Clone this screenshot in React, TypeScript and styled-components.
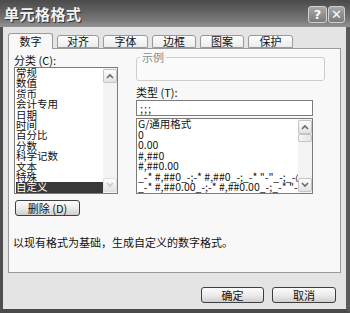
import React from "react";
import styled, { createGlobalStyle } from "styled-components";

const Global = createGlobalStyle`
  html, body { margin: 0; padding: 0; background: #e4e4e4; }
  body { font-family: "Noto Sans CJK SC", "Noto Sans", sans-serif; }
  * { box-sizing: border-box; }
`;

const Window = styled.div`
  width: 350px;
  height: 313px;
  display: flex;
  flex-direction: column;
  background: #e4e4e4;
  overflow: hidden;
`;

const TitleBar = styled.div`
  height: 27px;
  flex: none;
  display: flex;
  align-items: center;
  justify-content: space-between;
  padding: 0 5px 0 4px;
  background: linear-gradient(#4a4a4a 0%, #5e5e5e 35%, #787878 75%, #939393 100%);
`;

const Title = styled.div`
  font-size: 15px;
  font-weight: bold;
  color: #f2f2f2;
  letter-spacing: 0.5px;
  text-shadow: 1px 1px 0 #333;
  line-height: 16px;
`;

const TitleButtons = styled.div`
  display: flex;
  gap: 1px;
  margin-top: 1px;
`;

const TitleButton = styled.div<{ $w: number }>`
  width: ${(p) => p.$w}px;
  height: 17px;
  border: 1px solid #d0d0d0;
  border-radius: 3px;
  background: linear-gradient(#a8a8a8, #7a7a7a);
  display: flex;
  align-items: center;
  justify-content: center;
  color: #fafafa;
  font-family: "DejaVu Sans", sans-serif;
  font-weight: bold;
  font-size: 13px;
  line-height: 1;
`;

const Frame = styled.div`
  flex: 1;
  border-left: 3px solid #505050;
  border-right: 4px solid #5a5a5a;
  border-bottom: 4px solid #4a4a4a;
  display: flex;
  flex-direction: column;
`;

const TabRow = styled.div`
  display: flex;
  align-items: flex-end;
  height: 21px;
  padding: 0 0 0 5px;
  gap: 4px;
  position: relative;
  z-index: 1;
`;

const Tab = styled.div<{ $active?: boolean; $w: number }>`
  width: ${(p) => p.$w}px;
  height: ${(p) => (p.$active ? 16 : 13)}px;
  margin-bottom: ${(p) => (p.$active ? -1 : 0)}px;
  border: 1px solid #9a9a9a;
  border-bottom: ${(p) => (p.$active ? "none" : "1px solid #9a9a9a")};
  border-radius: 3px 3px 0 0;
  background: ${(p) =>
    p.$active ? "#f8f8f8" : "linear-gradient(#fdfdfd, #ececec)"};
  font-size: 11px;
  line-height: ${(p) => (p.$active ? 14 : 11)}px;
  text-align: center;
  color: #111;
`;

const Panel = styled.div`
  margin: 0 5px;
  height: 225px;
  border: 1px solid #9a9a9a;
  background: #f8f8f8;
  padding: 4px 0 0 5px;
  display: flex;
  flex-direction: column;
`;

const Columns = styled.div`
  display: flex;
  gap: 18px;
`;

const LeftCol = styled.div`
  width: 104px;
  display: flex;
  flex-direction: column;
`;

const RightCol = styled.div`
  width: 189px;
  display: flex;
  flex-direction: column;
`;

const Label = styled.div<{ $mt: number }>`
  margin-top: ${(p) => p.$mt}px;
  font-size: 11px;
  line-height: 12px;
  height: 12px;
  color: #111;
  white-space: nowrap;
`;

const ListBox = styled.div<{ $h: number; $mt: number; $w?: number }>`
  margin-top: ${(p) => p.$mt}px;
  height: ${(p) => p.$h}px;
  width: ${(p) => (p.$w ? `${p.$w}px` : "100%")};
  border: 1px solid #7c7c7c;
  background: #fff;
  display: flex;
`;

const Items = styled.div<{ $lh: number }>`
  flex: 1;
  min-width: 0;
  overflow: hidden;
  font-size: 10.5px;
  line-height: ${(p) => p.$lh}px;
  color: #111;
`;

const Item = styled.div<{ $sel?: boolean }>`
  white-space: nowrap;
  padding-left: ${(p) => (p.$sel ? 0 : 1)}px;
  margin-left: ${(p) => (p.$sel ? 1 : 0)}px;
  background: ${(p) => (p.$sel ? "#383838" : "transparent")};
  color: ${(p) => (p.$sel ? "#fff" : "#111")};
`;

const ScrollBar = styled.div`
  width: 14px;
  flex: none;
  background: #f3f3f3;
  display: flex;
  flex-direction: column;
  justify-content: space-between;
  padding: 1px 0;
`;

const ScrollTrack = styled.div`
  flex: 1;
  display: flex;
  flex-direction: column;
`;

const ScrollBtn = styled.div<{ $faint?: boolean }>`
  height: 14px;
  border: 1px solid ${(p) => (p.$faint ? "#e0e0e0" : "#c4c4c4")};
  border-radius: 2px;
  background: linear-gradient(#fdfdfd, #e2e2e2);
  display: flex;
  align-items: center;
  justify-content: center;
`;

const Thumb = styled.div`
  height: 8px;
  border: 1px solid #c4c4c4;
  border-radius: 2px;
  background: linear-gradient(90deg, #f6f6f6, #e4e4e4);
`;

const Button = styled.div<{ $w: number; $ml?: number }>`
  width: ${(p) => p.$w}px;
  height: 16px;
  margin-left: ${(p) => p.$ml ?? 0}px;
  border: 1px solid #3f3f3f;
  border-radius: 3px;
  background: linear-gradient(#fbfbfb 0%, #ececec 50%, #cfcfcf 100%);
  font-size: 11px;
  line-height: 14px;
  text-align: center;
  color: #111;
  white-space: nowrap;
`;

const DelButton = styled(Button)`
  margin-top: 6px;
`;

const GroupBox = styled.div`
  margin-top: 4px;
  height: 24px;
  border: 1px solid #cdcdcd;
  border-radius: 3px;
  background: #fbfbfb;
`;

const Legend = styled.div`
  display: inline-block;
  margin: -6px 0 0 3px;
  padding: 0 2px;
  background: #f8f8f8;
  font-size: 11px;
  line-height: 11px;
  color: #8a8a8a;
  vertical-align: top;
`;

const TextInput = styled.div`
  margin-top: 2px;
  width: 177px;
  height: 16px;
  border: 1px solid #7c7c7c;
  background: #fff;
  font-size: 11px;
  line-height: 14px;
  padding-left: 3px;
  color: #333;
  letter-spacing: 1px;
`;

const Description = styled.div`
  margin: 20px 0 0 -1px;
  font-size: 11px;
  line-height: 12px;
  color: #111;
  white-space: nowrap;
`;

const Footer = styled.div`
  display: flex;
  justify-content: flex-end;
  gap: 8px;
  padding-right: 10px;
  margin-top: 14px;
`;

const Chevron = ({ up, faint }: { up?: boolean; faint?: boolean }) => (
  <svg width="8" height="6" viewBox="0 0 8 6">
    <path
      d={up ? "M1 5 L4 2 L7 5" : "M1 1 L4 4 L7 1"}
      fill="none"
      stroke={faint ? "#c8c8c8" : "#6a6a6a"}
      strokeWidth="1.6"
    />
  </svg>
);

const categories = [
  "常规",
  "数值",
  "货币",
  "会计专用",
  "日期",
  "时间",
  "百分比",
  "分数",
  "科学记数",
  "文本",
  "特殊",
  "自定义",
];

const formats = [
  "G/通用格式",
  "0",
  "0.00",
  "#,##0",
  "#,##0.00",
  '_-* #,##0_-;-* #,##0_-;_-* "-"_-;_-@_-',
  '_-* #,##0.00_-;-* #,##0.00_-;_-* "-"??_-;_-@_-',
];

const tabs = [
  { t: "数字", w: 45, a: true },
  { t: "对齐", w: 42 },
  { t: "字体", w: 45 },
  { t: "边框", w: 44 },
  { t: "图案", w: 44 },
  { t: "保护", w: 45 },
];

export default function App() {
  return (
    <>
      <Global />
      <Window>
        <TitleBar>
          <Title>单元格格式</Title>
          <TitleButtons>
            <TitleButton $w={19}>?</TitleButton>
            <TitleButton $w={17}>✕</TitleButton>
          </TitleButtons>
        </TitleBar>
        <Frame>
          <TabRow>
            {tabs.map((t) => (
              <Tab key={t.t} $active={t.a} $w={t.w}>
                {t.t}
              </Tab>
            ))}
          </TabRow>
          <Panel>
            <Columns>
              <LeftCol>
                <Label $mt={1}>分类 (C):</Label>
                <ListBox $h={127} $mt={1}>
                  <Items $lh={10.4}>
                    {categories.map((c, i) => (
                      <Item key={c} $sel={i === categories.length - 1}>
                        {c}
                      </Item>
                    ))}
                  </Items>
                  <ScrollBar>
                    <ScrollBtn>
                      <Chevron up />
                    </ScrollBtn>
                    <ScrollBtn $faint>
                      <Chevron faint />
                    </ScrollBtn>
                  </ScrollBar>
                </ListBox>
                <DelButton $w={65} $ml={1}>
                  删除 (D)
                </DelButton>
              </LeftCol>
              <RightCol>
                <GroupBox>
                  <Legend>示例</Legend>
                </GroupBox>
                <Label $mt={5}>类型 (T):</Label>
                <TextInput>;;;</TextInput>
                <ListBox $h={76} $mt={2} $w={177}>
                  <Items $lh={10.5}>
                    {formats.map((f) => (
                      <Item key={f}>{f}</Item>
                    ))}
                  </Items>
                  <ScrollBar>
                    <ScrollTrack>
                      <ScrollBtn>
                        <Chevron up />
                      </ScrollBtn>
                      <Thumb />
                    </ScrollTrack>
                    <ScrollBtn>
                      <Chevron />
                    </ScrollBtn>
                  </ScrollBar>
                </ListBox>
              </RightCol>
            </Columns>
            <Description>以现有格式为基础，生成自定义的数字格式。</Description>
          </Panel>
          <Footer>
            <Button $w={63}>确定</Button>
            <Button $w={64}>取消</Button>
          </Footer>
        </Frame>
      </Window>
    </>
  );
}
